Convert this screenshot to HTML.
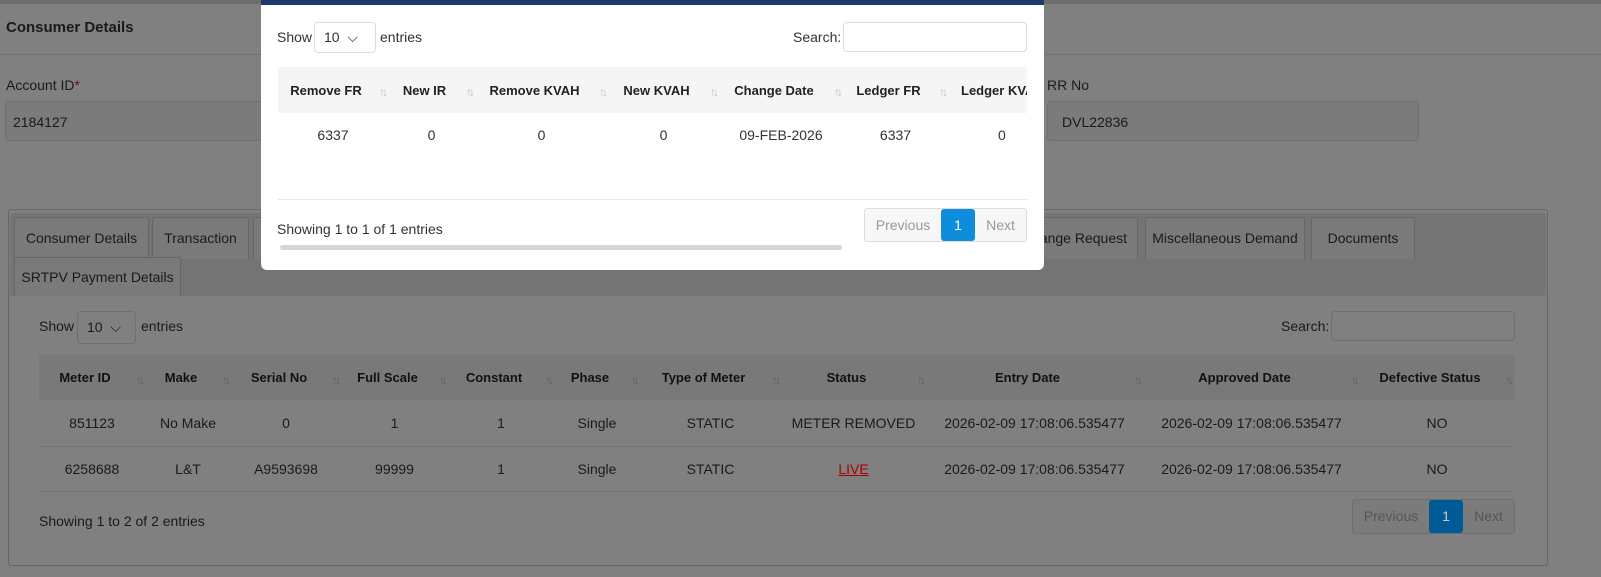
<!DOCTYPE html>
<html><head><meta charset="utf-8"><style>
*{box-sizing:border-box;margin:0;padding:0}
body{width:1601px;height:577px;overflow:hidden;background:#808080;font-family:"Liberation Sans",sans-serif;font-size:14px;color:#1a1a1a;position:relative}
.abs{position:absolute}
.inp{position:absolute;border:1px solid #6f6f6f;border-radius:4px;background:#808080}
.sel{position:absolute;border:1px solid #6f6f6f;border-radius:4px;background:#808080;font-size:14px;padding-left:9px}
.tab{position:absolute;height:42px;border:1px solid #666;border-bottom:none;background:#7a7a7a;border-radius:3px 3px 0 0;font-size:14px;color:#1a1a1a;text-align:center;line-height:40px}
table{border-collapse:collapse;position:absolute;font-size:14px;table-layout:fixed}
th{font-weight:bold;color:#111;text-align:center;position:relative;padding-right:14px;font-size:13px}
th::after{content:"↑↓";position:absolute;right:3px;top:50%;margin-top:-5px;font-size:12px;color:#5e5e5e;font-weight:normal;letter-spacing:-3px}
td{text-align:center;color:#1a1a1a}
.pg{position:absolute;border:1px solid #6f6f6f;border-radius:3px;display:flex;font-size:14px;color:#555;background:#7b7b7b}
.pg span{display:block;text-align:center}
.pg .a{background:#005a96;color:#ccc;border-radius:3px}
.m{background:#fff;color:#333}
.m .inp,.m .sel{border-color:#ddd;background:#fff}
.m th{color:#222}
.m th::after{color:#bbb}
.m td{color:#333}
.m .pg{border-color:#ddd;background:#f7f7f7;color:#999}
.m .pg .a{background:#0d8ddb;color:#fff}
</style></head><body>
<div class="abs" style="left:0;top:0;width:1601px;height:4px;background:#6d6d6d"></div>
<div class="abs" style="left:6px;top:19px;font-size:15px;font-weight:bold;color:#1a1a1a">Consumer Details</div>
<div class="abs" style="left:0;top:54px;width:1601px;height:1px;background:#717171"></div>
<div class="abs" style="left:6px;top:77px;font-size:14px">Account ID<span style="color:#800">*</span></div>
<div class="inp" style="left:5px;top:101px;width:300px;height:40px;background:#7b7b7b;padding:12px 0 0 7px;font-size:14px">2184127</div>
<div class="abs" style="left:1047px;top:77px;font-size:14px">RR No</div>
<div class="inp" style="left:1047px;top:101px;width:372px;height:40px;background:#7b7b7b;padding:12px 0 0 14px;font-size:14px">DVL22836</div>

<div class="abs" style="left:8px;top:209px;width:1540px;height:357px;border:1px solid #666;border-radius:3px"></div>
<div class="abs" style="left:10px;top:213px;width:1536px;height:83px;background:#747474;border-radius:3px"></div>
<div class="tab" style="left:14px;top:217px;width:135px">Consumer Details</div>
<div class="tab" style="left:152px;top:217px;width:97px">Transaction</div>
<div class="tab" style="left:253px;top:217px;width:10px"></div>
<div class="tab" style="left:1000px;top:217px;width:138px;text-align:right;padding-right:10px">Change Request</div>
<div class="tab" style="left:1145px;top:217px;width:160px">Miscellaneous Demand</div>
<div class="tab" style="left:1311px;top:217px;width:104px">Documents</div>
<div class="tab" style="left:14px;top:257px;width:167px;height:39px;line-height:38px">SRTPV Payment Details</div>

<div class="abs" style="left:39px;top:318px">Show</div>
<div class="sel" style="left:77px;top:311px;width:59px;height:33px;line-height:31px">10 &nbsp;⌵</div>
<div class="abs" style="left:141px;top:318px">entries</div>
<div class="abs" style="left:1281px;top:318px">Search:</div>
<div class="inp" style="left:1331px;top:311px;width:184px;height:30px"></div>
<table style="left:39px;top:355px;width:1475px">
<colgroup><col style="width:106px"><col style="width:86px"><col style="width:110px"><col style="width:107px"><col style="width:106px"><col style="width:86px"><col style="width:141px"><col style="width:145px"><col style="width:217px"><col style="width:217px"><col style="width:154px"></colgroup>
<tr style="background:#797979;height:45px"><th>Meter ID</th><th>Make</th><th>Serial No</th><th>Full Scale</th><th>Constant</th><th>Phase</th><th>Type of Meter</th><th>Status</th><th>Entry Date</th><th>Approved Date</th><th>Defective Status</th></tr>
<tr style="height:46px;border-bottom:1px solid #737373"><td>851123</td><td>No Make</td><td>0</td><td>1</td><td>1</td><td>Single</td><td>STATIC</td><td>METER REMOVED</td><td>2026-02-09 17:08:06.535477</td><td>2026-02-09 17:08:06.535477</td><td>NO</td></tr>
<tr style="height:45px;border-bottom:1px solid #737373"><td>6258688</td><td>L&amp;T</td><td>A9593698</td><td>99999</td><td>1</td><td>Single</td><td>STATIC</td><td><u style="color:#a00">LIVE</u></td><td>2026-02-09 17:08:06.535477</td><td>2026-02-09 17:08:06.535477</td><td>NO</td></tr>
</table>
<div class="abs" style="left:39px;top:513px">Showing 1 to 2 of 2 entries</div>
<div class="pg" style="left:1352px;top:499px;width:163px;height:35px;line-height:33px"><span style="width:76px">Previous</span><span class="a" style="width:34px">1</span><span style="width:51px">Next</span></div>

<div class="abs m" style="left:261px;top:0;width:783px;height:270px;border-radius:0 0 6px 6px;overflow:hidden">
<div class="abs" style="left:0;top:0;width:783px;height:5px;background:#1f3b6e"></div>
<div class="abs" style="left:16px;top:29px">Show</div>
<div class="sel" style="left:53px;top:22px;width:62px;height:31px;line-height:29px">10 &nbsp;⌵</div>
<div class="abs" style="left:119px;top:29px">entries</div>
<div class="abs" style="left:532px;top:29px">Search:</div>
<div class="inp" style="left:582px;top:22px;width:184px;height:30px"></div>
<div class="abs" style="left:17px;top:67px;width:749px;height:130px;overflow:hidden">
<table style="left:0;top:0;width:840px">
<colgroup><col style="width:110px"><col style="width:87px"><col style="width:133px"><col style="width:111px"><col style="width:124px"><col style="width:105px"><col style="width:170px"></colgroup>
<tr style="background:#f5f5f5;height:46px"><th>Remove FR</th><th>New IR</th><th>Remove KVAH</th><th>New KVAH</th><th>Change Date</th><th>Ledger FR</th><th style="text-align:left;padding-left:13px">Ledger KVAH</th></tr>
<tr style="height:43px"><td>6337</td><td>0</td><td>0</td><td>0</td><td>09-FEB-2026</td><td>6337</td><td style="text-align:left;padding-left:50px">0</td></tr>
</table></div>
<div class="abs" style="left:17px;top:199px;width:749px;height:1px;background:#e8e8e8"></div>
<div class="abs" style="left:16px;top:221px">Showing 1 to 1 of 1 entries</div>
<div class="abs" style="left:19px;top:245px;width:562px;height:5px;background:#d6d6d6;border-radius:3px"></div>
<div class="pg" style="left:603px;top:208px;width:163px;height:34px;line-height:32px"><span style="width:76px">Previous</span><span class="a" style="width:34px">1</span><span style="width:51px">Next</span></div>
</div>
</body></html>
